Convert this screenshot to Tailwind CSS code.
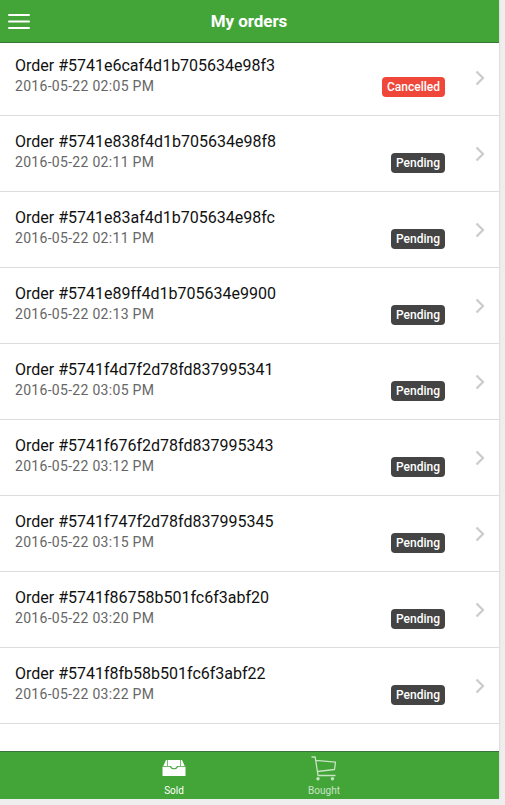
<!DOCTYPE html>
<html lang="en">

<head>
  <meta charset="UTF-8">
  <meta name="viewport" content="width=device-width, initial-scale=1.0">
  <title>My orders</title>
  <script src="https://cdn.jsdelivr.net/npm/@tailwindcss/browser@4"></script>
</head>

<body class="bg-[#eeeeee] overflow-hidden font-[Roboto,sans-serif]">
  <div class="w-[499px] h-[799px] bg-white flex flex-col overflow-hidden shadow-[0_0_2px_rgba(0,0,0,0.2)]">
    <!-- Header -->
    <header class="relative z-10 h-[43px] shrink-0 bg-[#43a538] border-b border-[#38753a] grid grid-cols-[1fr_auto_1fr] items-center text-white">
      <button class="ml-2 w-6" aria-label="Menu">
        <svg class="block w-[22px] h-[15px]" viewBox="0 0 22 15" stroke="currentColor" stroke-width="2" stroke-linecap="round">
          <path d="M1 1h20M1 7.5h20M1 14h20" />
        </svg>
      </button>
      <h1 class="-ml-px text-[17px] font-bold leading-[42px] tracking-[-0.05px]">My orders</h1>
    </header>

    <!-- Orders -->
    <main class="flex-1 overflow-hidden">
      <ul id="orders" class="-mt-[3px]"></ul>
    </main>

    <!-- Tabs -->
    <nav class="h-12 shrink-0 bg-[#43a538] border-t border-[#38753a] flex justify-center text-white text-[10px] leading-3">
      <a class="w-[150px] flex flex-col items-center">
        <svg class="-ml-px mt-[7px] w-6 h-[18px]" viewBox="0 0 24 18" fill="currentColor">
          <path d="M4 1h1v6H1.300zM5.700 1h12.600v6H15.500c-.7 0-.8.6-1.200 1.200-1 1.300-3.600 1.300-4.600 0C9.300 7.600 9.200 7 8.500 7H5.700zM19 1h1l2.700 6H19z" />
          <path d="M.5 7.700H8c.8 3.400 7.200 3.400 8 0h7.500V17H.5z" />
        </svg>
        <span class="-ml-px mt-2">Sold</span>
      </a>
      <a class="w-[150px] flex flex-col items-center opacity-70">
        <svg class="-ml-px mt-[4px] w-[26px] h-[25px]" viewBox="0 0 26 25" fill="none" stroke="currentColor" stroke-width="1.300" stroke-linejoin="round">
          <path d="M.5 1h3.700L7 19.500h17.500M5 4.300l19.500 1.900-1 7.300L6.500 15.500" />
          <circle cx="7" cy="22.800" r="1.700" fill="currentColor" stroke="none" />
          <circle cx="21.500" cy="22.800" r="1.700" fill="currentColor" stroke="none" />
        </svg>
        <span class="-ml-px mt-1">Bought</span>
      </a>
    </nav>
  </div>

  <template id="order-row">
    <li class="h-[76px] border-b border-[#dddddd] pl-[15px] pr-3.5 flex">
      <div class="flex-1 pt-4">
        <h2 class="text-base leading-5 text-[#111111]"></h2>
        <p class="text-sm leading-5 tracking-[0.3px] text-[#666666]"></p>
      </div>
      <span class="mt-[37px] h-5 px-[5px] rounded-[4px] text-xs leading-5 font-medium text-white"></span>
      <svg class="ml-[30px] mt-[30px] w-2.5 h-4" viewBox="0 0 10 16" fill="none" stroke="#cccccc" stroke-width="2.300">
        <path d="M1.500 1.500L8 8l-6.500 6.500" />
      </svg>
    </li>
  </template>

  <script>
    const orders = [
      ['5741e6caf4d1b705634e98f3', '02:05', 'Cancelled'],
      ['5741e838f4d1b705634e98f8', '02:11', 'Pending'],
      ['5741e83af4d1b705634e98fc', '02:11', 'Pending'],
      ['5741e89ff4d1b705634e9900', '02:13', 'Pending'],
      ['5741f4d7f2d78fd837995341', '03:05', 'Pending'],
      ['5741f676f2d78fd837995343', '03:12', 'Pending'],
      ['5741f747f2d78fd837995345', '03:15', 'Pending'],
      ['5741f86758b501fc6f3abf20', '03:20', 'Pending'],
      ['5741f8fb58b501fc6f3abf22', '03:22', 'Pending'],
    ];
    const badgeColor = { Cancelled: 'bg-[#ef473a]', Pending: 'bg-[#444444]' };
    const list = document.getElementById('orders');
    const template = document.getElementById('order-row');

    for (const [id, time, status] of orders) {
      const row = template.content.cloneNode(true);
      row.querySelector('h2').textContent = `Order #${id}`;
      row.querySelector('p').textContent = `2016-05-22 ${time} PM`;
      const badge = row.querySelector('span');
      badge.textContent = status;
      badge.classList.add(badgeColor[status]);
      list.appendChild(row);
    }
  </script>
</body>

</html>
